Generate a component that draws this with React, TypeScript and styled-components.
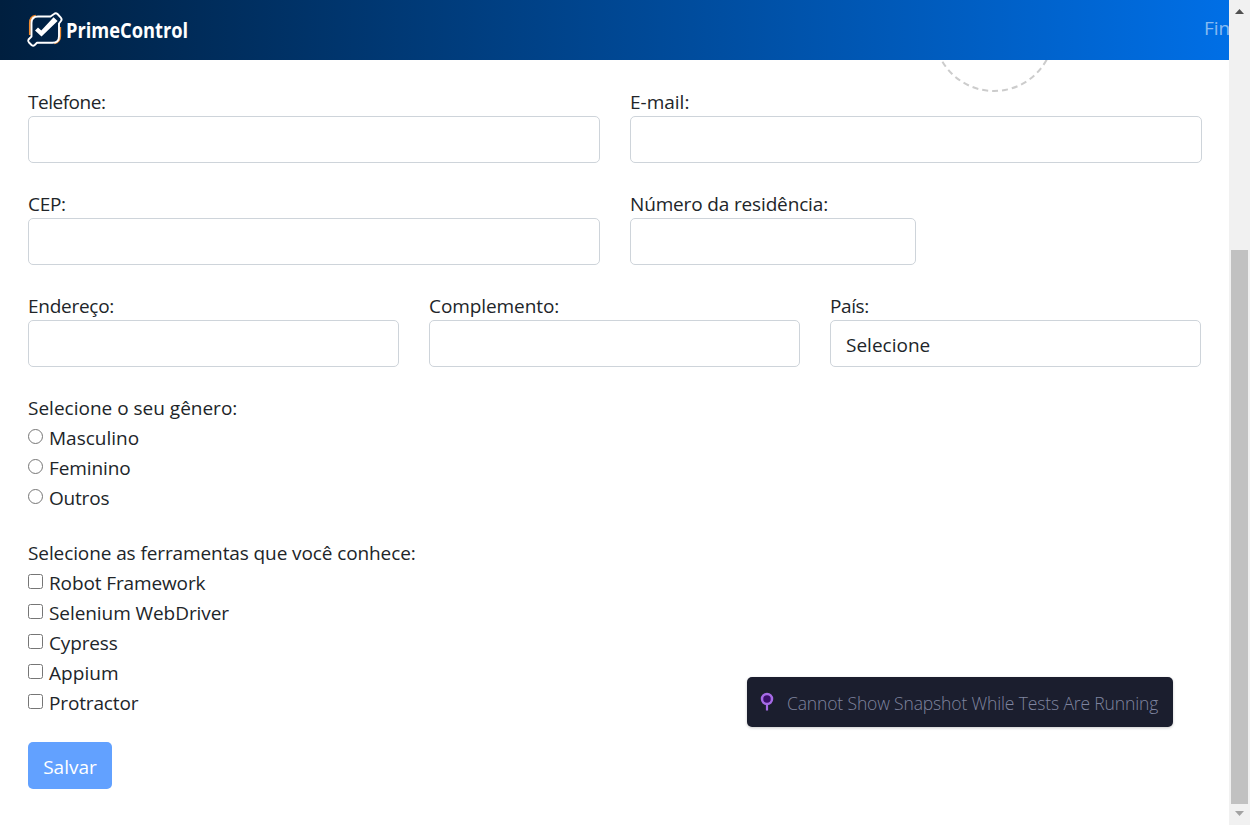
import React from 'react';
import styled, { createGlobalStyle } from 'styled-components';

const GlobalStyle = createGlobalStyle`
  *, *::before, *::after { box-sizing: border-box; }
  html, body { margin: 0; height: 825px; overflow: hidden; background: #fff; }
  body { font-family: "Open Sans", "Noto Sans", sans-serif; font-size: 19px; line-height: 30px; color: #212529; }
`;

const Frame = styled.div`
  display: flex;
  width: 1250px;
  height: 825px;
  overflow: hidden;
`;

const Page = styled.div`
  position: relative;
  display: flex;
  flex-direction: column;
  width: 1229px;
  overflow: hidden;
`;

const Header = styled.header`
  position: relative;
  z-index: 1;
  display: flex;
  flex: none;
  justify-content: space-between;
  height: 60px;
  overflow: hidden;
  background: linear-gradient(90deg, #001f3f, #006fe6);
`;

const Brand = styled.div`
  display: flex;
  padding: 10px 0 0 26px;
`;

const BrandName = styled.span`
  margin: 5px 0 0 1.5px;
  font-family: "Open Sans", sans-serif;
  font-size: 21px;
  font-weight: 700;
  line-height: 30px;
  color: #fff;
  white-space: nowrap;
  transform: scaleX(0.87);
  transform-origin: left;
`;

const NavItem = styled.span`
  width: 25px;
  padding-top: 13px;
  color: rgba(255, 255, 255, 0.55);
  white-space: nowrap;
`;

const Avatar = styled.svg`
  position: absolute;
  left: 933px;
  top: -29px;
`;

const Form = styled.form`
  display: flex;
  flex-direction: column;
  gap: 25px;
  padding: 26px 28px 0;
`;

const Row = styled.div<{ $columns: string }>`
  display: grid;
  grid-template-columns: ${(p) => p.$columns};
  column-gap: 30px;
`;

const Field = styled.label`
  display: flex;
  flex-direction: column;
`;

const Text = styled.span<{ $ls?: number }>`
  align-self: flex-start;
  height: 30px;
  padding-top: 1px;
  letter-spacing: ${(p) => p.$ls ?? 0}px;
  white-space: nowrap;
`;

const Input = styled.input`
  width: 100%;
  height: 47px;
  border: 1px solid #ced4da;
  border-radius: 5px;
  outline: none;
  font: inherit;
`;

const SelectBox = styled.div`
  height: 47px;
  padding: 9px 15px;
  border: 1px solid #ced4da;
  border-radius: 5px;
`;

const Group = styled.div`
  display: flex;
  flex-direction: column;
`;

const Option = styled.label`
  display: flex;
  align-items: flex-start;
  gap: 6px;
  height: 30px;
`;

const Mark = styled.input<{ $round?: boolean }>`
  appearance: none;
  flex: none;
  width: 15px;
  height: 15px;
  margin: 7px 0 0;
  border: 1px solid #767676;
  border-radius: ${(p) => (p.$round ? '50%' : '2.5px')};
  background: #fff;
`;

const Save = styled.button`
  align-self: flex-start;
  width: 84px;
  height: 47px;
  padding: 2px 0 0;
  border: 0;
  border-radius: 5px;
  background: #62a1ff;
  color: #fff;
  font: inherit;
`;

const Toast = styled.div`
  position: absolute;
  left: 747px;
  top: 677px;
  display: flex;
  align-items: center;
  width: 426px;
  height: 50px;
  padding-left: 13px;
  border-radius: 5px;
  background: #1b1e2e;
  box-shadow: 0 1px 3px rgba(0, 0, 0, 0.2);
  color: #7f849f;
  font-size: 17.5px;
  font-weight: 300;
`;

const ToastText = styled.span`
  margin: 1px 0 0 13px;
  letter-spacing: -0.14px;
  white-space: nowrap;
`;

const Scrollbar = styled.div`
  display: flex;
  flex-direction: column;
  align-items: center;
  width: 21px;
  background: #f1f1f1;
`;

const Thumb = styled.div`
  width: 17px;
  height: 554px;
  margin-top: 236px;
  background: #c1c1c1;
`;

const Arrow = styled.svg<{ $top: number }>`
  flex: none;
  margin-top: ${(p) => p.$top}px;
`;

const Logo = () => (
  <svg width="38" height="40" viewBox="26 10 38 40" fill="none">
    <path d="M29.800 35V23q0-6.500 6-7.300M60.300 27v9q0 6-6 7.500" stroke="#f08a2c" strokeWidth="1.700" />
    <path
      d="M50.500 16.500H38q-6.500 0-6.500 6.500v13.500l-3 3q-1 1.600.5 3l2.500 2.500q1.700 1.300 3.200 0l2.300-2.200h15.500q6.500 0 6.500-6.500V23.500l2-2.500q1.300-1.600-.2-3.300L57.500 14q-1.700-1.500-3.500 0z"
      stroke="#fff"
      strokeWidth="1.900"
      strokeLinejoin="round"
    />
    <path d="M35 30.500l3-3 3.300 3L53.600 17.200l4 3.900L41.500 36.500z" fill="#fff" />
  </svg>
);

type Item = { name: string; ls: number };

const genders: Item[] = [
  { name: 'Masculino', ls: 0 },
  { name: 'Feminino', ls: -0.1 },
  { name: 'Outros', ls: -0.2 },
];

const tools: Item[] = [
  { name: 'Robot Framework', ls: -0.12 },
  { name: 'Selenium WebDriver', ls: -0.07 },
  { name: 'Cypress', ls: -0.15 },
  { name: 'Appium', ls: 0.05 },
  { name: 'Protractor', ls: -0.15 },
];

const LabeledInput = ({ label, ls }: { label: string; ls?: number }) => (
  <Field>
    <Text $ls={ls}>{label}</Text>
    <Input />
  </Field>
);

export default function App() {
  return (
    <>
      <GlobalStyle />
      <Frame>
        <Page>
          <Avatar width="122" height="122" fill="none">
            <circle cx="61" cy="60" r="60" stroke="#ccc" strokeWidth="2" strokeDasharray="6 4" />
          </Avatar>
          <Header>
            <Brand>
              <Logo />
              <BrandName>PrimeControl</BrandName>
            </Brand>
            <NavItem>Finalizar</NavItem>
          </Header>
          <Form>
            <Row $columns="572px 572px">
              <LabeledInput label="Telefone:" ls={-0.48} />
              <LabeledInput label="E-mail:" />
            </Row>
            <Row $columns="572px 286px">
              <LabeledInput label="CEP:" ls={-0.3} />
              <LabeledInput label="Número da residência:" ls={-0.15} />
            </Row>
            <Row $columns="371px 371px 371px">
              <LabeledInput label="Endereço:" ls={-0.27} />
              <LabeledInput label="Complemento:" ls={-0.08} />
              <Field>
                <Text $ls={-0.4}>País:</Text>
                <SelectBox>Selecione</SelectBox>
              </Field>
            </Row>
            <Group>
              <Text>Selecione o seu gênero:</Text>
              {genders.map(({ name, ls }) => (
                <Option key={name}>
                  <Mark type="radio" name="gender" $round />
                  <Text $ls={ls}>{name}</Text>
                </Option>
              ))}
            </Group>
            <Group>
              <Text $ls={-0.1}>Selecione as ferramentas que você conhece:</Text>
              {tools.map(({ name, ls }) => (
                <Option key={name}>
                  <Mark type="checkbox" />
                  <Text $ls={ls}>{name}</Text>
                </Option>
              ))}
            </Group>
            <Save type="button">Salvar</Save>
          </Form>
          <Toast>
            <svg width="14" height="20" fill="none">
              <path d="M7 11v7.500" stroke="#a66ae6" strokeWidth="2.200" />
              <circle cx="7" cy="7" r="5" fill="#3b0f6b" stroke="#a66ae6" strokeWidth="2.500" />
            </svg>
            <ToastText>Cannot Show Snapshot While Tests Are Running</ToastText>
          </Toast>
        </Page>
        <Scrollbar>
          <Arrow $top={9} width="9" height="5"><path d="M0 5L4.500 0 9 5z" fill="#505050" /></Arrow>
          <Thumb />
          <Arrow $top={7} width="9" height="5"><path d="M0 0L4.500 5 9 0z" fill="#a3a3a3" /></Arrow>
        </Scrollbar>
      </Frame>
    </>
  );
}
